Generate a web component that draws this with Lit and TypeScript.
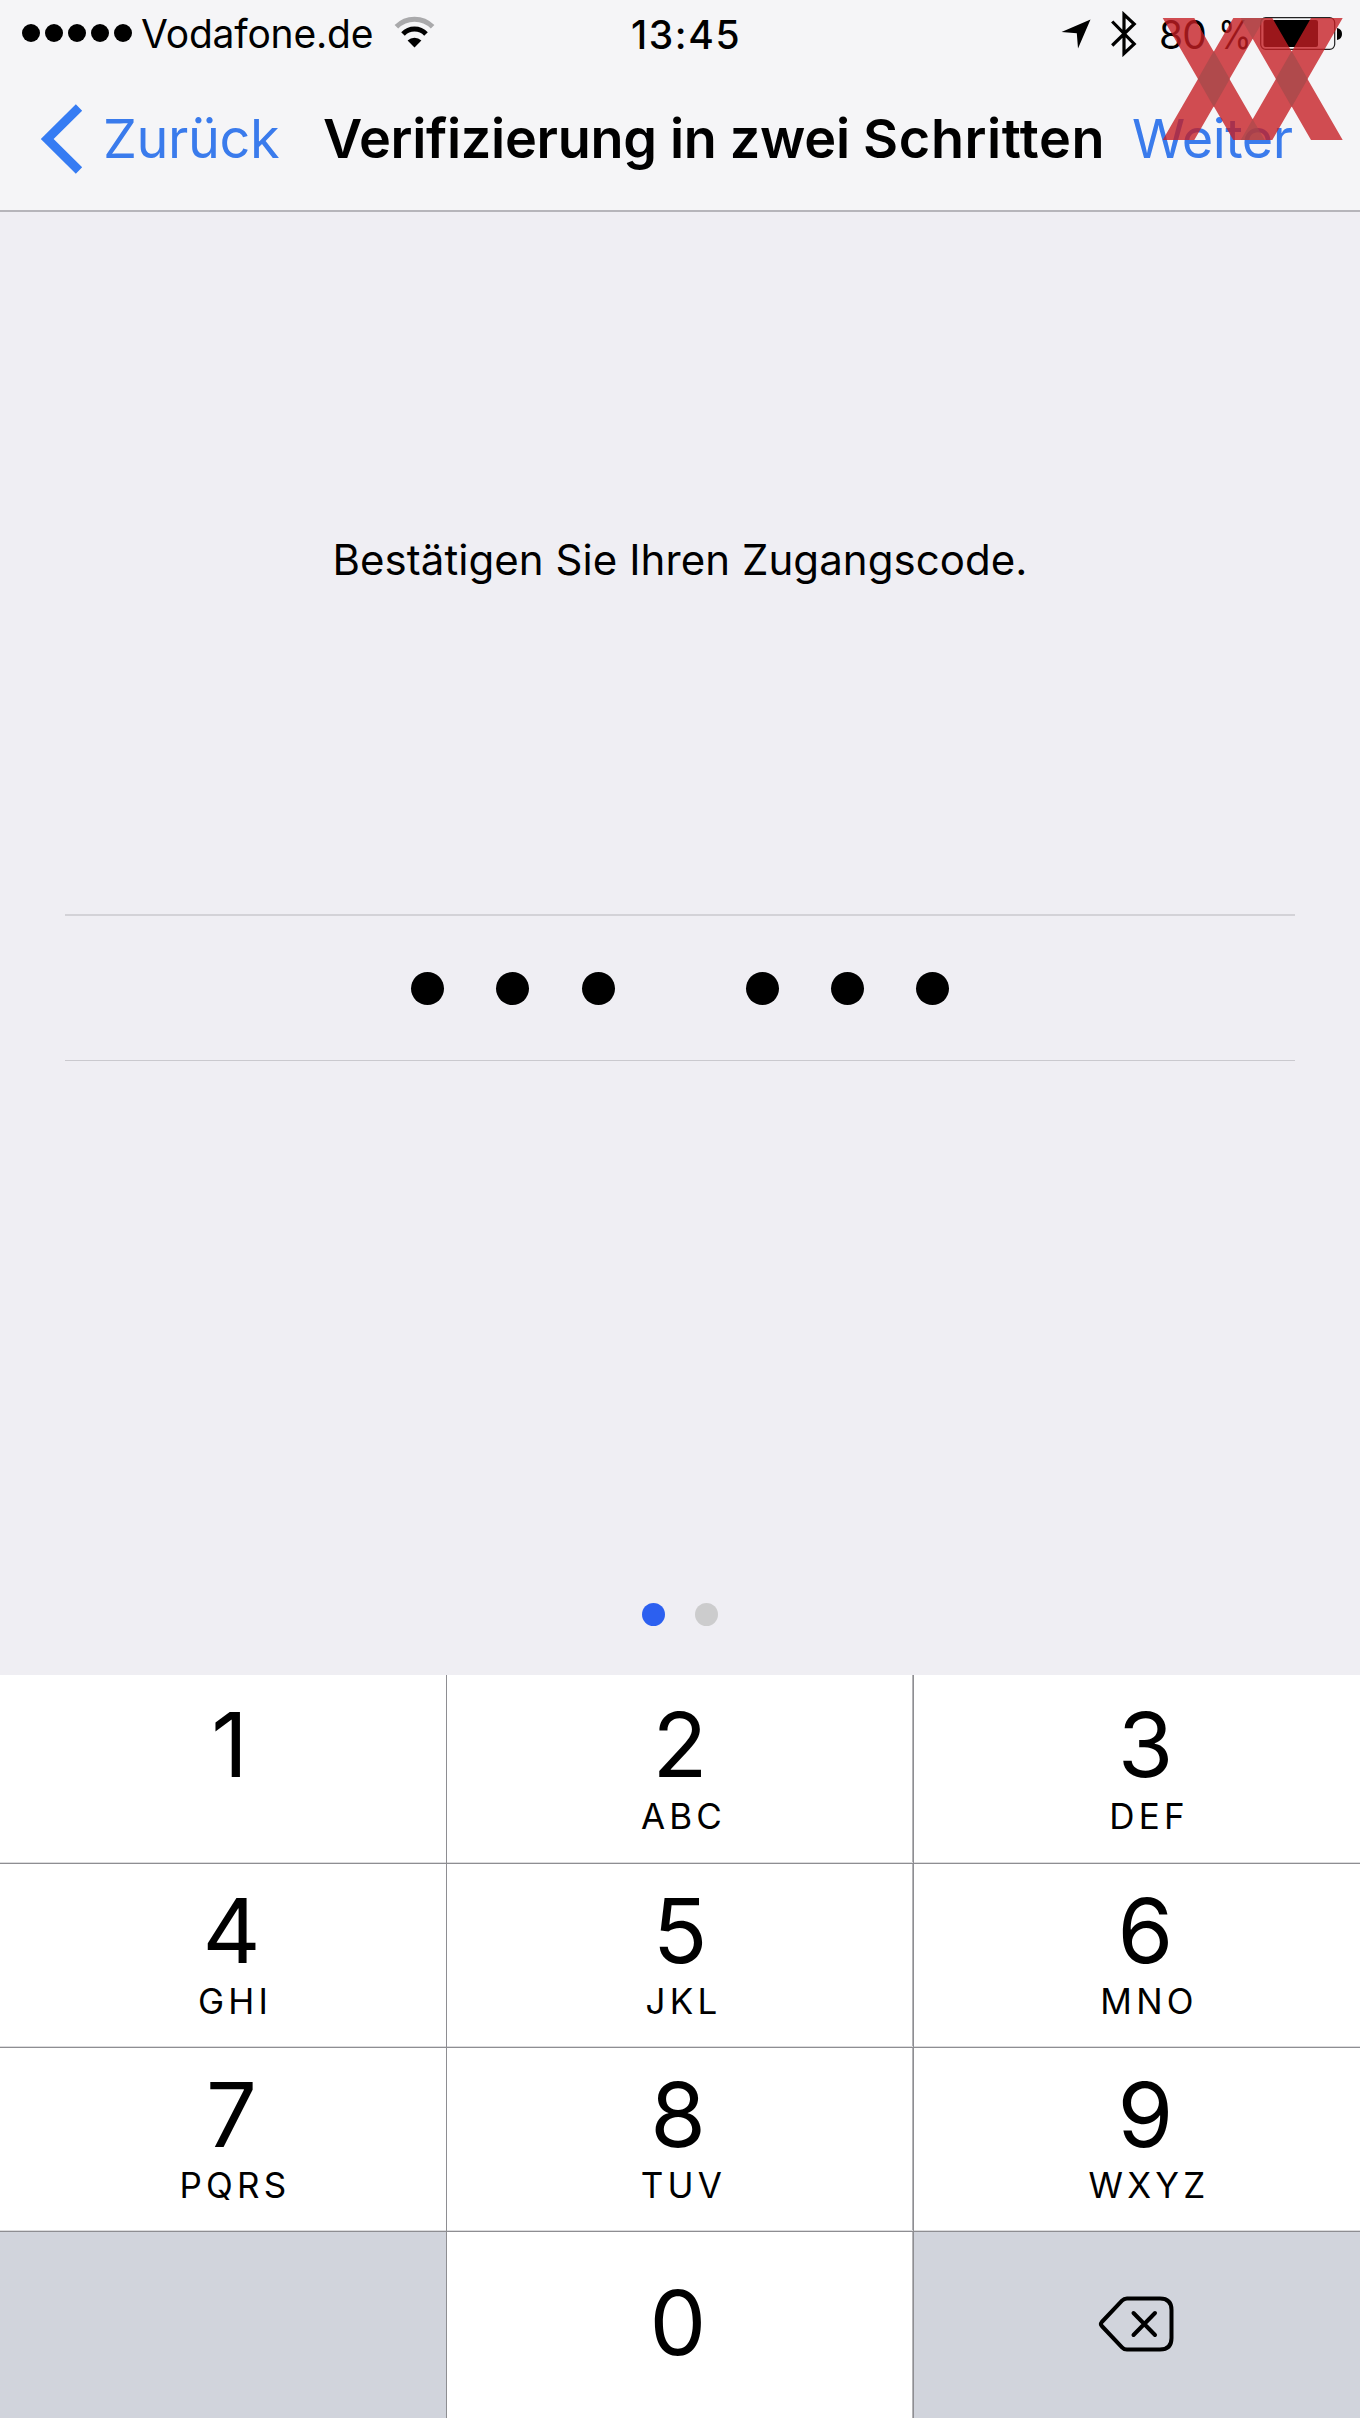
import { LitElement, html, css, svg } from "lit";
import { customElement } from "lit/decorators.js";

const KEYS = [
  ["1", ""], ["2", "ABC"], ["3", "DEF"],
  ["4", "GHI"], ["5", "JKL"], ["6", "MNO"],
  ["7", "PQRS"], ["8", "TUV"], ["9", "WXYZ"],
];

@customElement("status-bar")
class StatusBar extends LitElement {
  static styles = css`
    :host { display: grid; grid-template-columns: 632px 1fr auto; align-items: center; height: 68px; padding: 0 17px 0 22px; box-sizing: border-box; }
    .left, .right, .signal { display: flex; align-items: center; }
    .signal { gap: 5px; margin-right: 9px; padding-bottom: 2px; }
    .signal i { width: 18px; height: 18px; border-radius: 50%; background: #000; }
    .text { font-size: 39px; line-height: 48px; white-space: nowrap; }
    .carrier { letter-spacing: -0.2px; width: 253px; }
    .left { width: 600px; }
    .time { font-weight: 500; letter-spacing: 1.6px; margin-left: -23px; padding-top: 1px; }
    .battery-text { display: flex; gap: 12px; letter-spacing: -1px; width: 101px; padding-top: 1px; }
    .percent { transform: scaleX(0.88); transform-origin: left; }
    svg { display: block; flex: none; }
    .wifi { margin-top: -4px; }
    .arrow { margin-right: 20px; }
    .bt { margin-right: 22px; }
  `;
  render() {
    return html`
      <div class="left">
        <div class="signal"><i></i><i></i><i></i><i></i><i></i></div>
        <div class="text carrier">Vodafone.de</div>
        <svg class="wifi" width="42" height="32" viewBox="0 0 42 32" fill="none" stroke="#000" stroke-width="5">
          <path d="M2.4 10.8A25.4 25.4 0 0 1 38.6 10.8" stroke="#a9a9ab" />
          <path d="M9 18A16 16 0 0 1 32 18" />
          <path d="M20.5 31.4L13.6 24.4A10.5 10.5 0 0 1 27.4 24.4Z" fill="#000" stroke="none" />
        </svg>
      </div>
      <div class="text time">13:45</div>
      <div class="right">
        <svg class="arrow" width="30" height="30" viewBox="0 0 30 30"><path d="M29.5 0.5L17 29.5L15.8 14.3L0.5 13Z" /></svg>
        <svg class="bt" width="26" height="46" viewBox="0 0 26 46" fill="none" stroke="#000" stroke-width="3.2"><path d="M1.2 10.5L23.2 33L13 42.5V3.5L23.2 13L1.2 34.5" /></svg>
        <div class="text battery-text"><span>80</span> <span class="percent">%</span></div>
        <svg width="83" height="34" viewBox="0 0 83 34"><rect x="0.7" y="0.7" width="74" height="31.6" rx="5" fill="none" stroke="#222" stroke-width="1.2" /><rect x="3.5" y="3" width="54.5" height="27" rx="2" /><path d="M77 11Q82 12 82 17Q82 22 77 23Z" /></svg>
      </div>`;
  }
}

@customElement("nav-bar")
class NavBar extends LitElement {
  static styles = css`
    :host { display: flex; align-items: center; height: 144px; box-sizing: border-box; border-bottom: 2px solid #b6b5ba; padding-left: 40px; font-size: 54px; line-height: 66px; white-space: nowrap; }
    svg { display: block; flex: none; margin-right: 20px; }
    .link { color: #3a7bec; }
    .back { width: 220px; letter-spacing: -0.4px; }
    .title { width: 809px; font-weight: 600; letter-spacing: -0.3px; }
    .last-word { letter-spacing: 0.6px; }
    .next { letter-spacing: -0.6px; }
  `;
  render() {
    return html`
      <svg width="43" height="70" viewBox="0 0 43 70" fill="none" stroke="#367cf3" stroke-width="9"><path d="M39 3.5L7.2 35L39 66.5" /></svg>
      <div class="link back">Zurück</div>
      <div class="title">Verifizierung in zwei <span class="last-word">Schritten</span></div>
      <div class="link next">Weiter</div>`;
  }
}

@customElement("key-pad")
class KeyPad extends LitElement {
  static styles = css`
    :host { display: grid; grid-template-columns: 446px 466px 446px; grid-template-rows: 188px 183px 183px 186px; gap: 1px; background: #8e8e92; height: 743px; }
    .key { background: #fff; display: flex; flex-direction: column; align-items: center; padding-top: 21px; box-sizing: border-box; overflow: hidden; box-shadow: inset 0 -1px #dcdcde; }
    .key:nth-child(3n + 1) { padding-left: 17px; }
    .key:nth-child(3n) { padding-left: 17px; }
    .key:nth-child(3n + 2) { box-shadow: inset 0 -1px #dcdcde, inset -1px 0 #b4b4b7; }
    .key:nth-child(n + 4) { padding-top: 18px; }
    .digit { font-size: 90px; line-height: 98px; }
    .key:first-child .digit { margin-right: 4px; }
    .key:nth-child(8) .digit, .key.zero .digit { margin-right: 4px; }
    .letters { font-size: 35px; line-height: 44px; letter-spacing: 4.2px; margin-right: -7px; }
    .key:nth-child(n + 4) .letters { margin-top: -1px; }
    .key.grey { background: #d1d4dc; justify-content: center; padding: 0; box-shadow: none; }
    .key.zero { padding-top: 42px; box-shadow: inset -1px 0 #b4b4b7; }
    svg { display: block; margin: 0 3px 2px 0; }
  `;
  render() {
    return html`
      ${KEYS.map(([d, l]) => html`<div class="key"><div class="digit">${d}</div><div class="letters">${l}</div></div>`)}
      <div class="key grey"></div>
      <div class="key zero"><div class="digit">0</div></div>
      <div class="key grey">
        <svg width="76" height="56" viewBox="0 0 76 56" fill="none" stroke="#000" stroke-width="4" stroke-linecap="round" stroke-linejoin="round"><path d="M29 2.5H62Q73.5 2.5 73.5 14V42Q73.5 53.5 62 53.5H29Q26 53.5 24 51.3L3.8 30Q2 28 3.8 26L24 4.7Q26 2.5 29 2.5Z" /><path d="M35.5 17L57 39M57 17L35.5 39" /></svg>
      </div>`;
  }
}

@customElement("app-root")
class AppRoot extends LitElement {
  static styles = css`
    :host { display: flex; flex-direction: column; position: relative; width: 1360px; height: 2418px; overflow: hidden; background: #efeef3; color: #000; font-family: Inter, "Liberation Sans", sans-serif; font-feature-settings: "calt" 0; }
    header { background: #f5f5f7; }
    main { flex: 1; display: flex; flex-direction: column; align-items: center; }
    .prompt { margin-top: 322px; font-size: 42px; line-height: 52px; letter-spacing: 0.06px; white-space: nowrap; }
    .code { margin-top: 328px; width: 1230px; height: 147px; box-sizing: border-box; border-top: 2px solid #d3d2d7; border-bottom: 1px solid #cac9ce; display: flex; justify-content: center; align-items: center; gap: 131px; }
    .group { display: flex; gap: 52.4px; }
    .group i { width: 33px; height: 33px; border-radius: 50%; background: #000; }
    .pages { display: flex; gap: 30px; margin-top: 542px; }
    .pages i { width: 23px; height: 23px; border-radius: 50%; background: #cccccd; }
    .pages .on { background: #2c60f0; }
    .badge { position: absolute; left: 1162px; top: 18px; }
  `;
  render() {
    const bars = svg`
      <path d="M0.7 0H32.3L102.7 122H71.3ZM71.3 0H102.7L32.3 122H0.7ZM78.7 0H110.3L180.7 122H149ZM149 0H180.7L110.3 122H78.7Z" fill="#c51d22" fill-opacity="0.785" />
      <path d="M51.8 33L67.8 61L51.8 89L35.8 61ZM129.7 33L145.7 61L129.7 89L113.7 61Z" fill="#b04a4c" />
      <path d="M78.7 0H102.7L90.7 20.8ZM78.7 122H102.7L90.7 101.2Z" fill="#a84a4c" fill-opacity="0.65" />`;
    return html`
      <header><status-bar></status-bar><nav-bar></nav-bar></header>
      <main>
        <div class="prompt">Bestätigen Sie Ihren Zugangscode.</div>
        <div class="code"><div class="group"><i></i><i></i><i></i></div><div class="group"><i></i><i></i><i></i></div></div>
        <div class="pages"><i class="on"></i><i></i></div>
      </main>
      <key-pad></key-pad>
      <svg class="badge" width="182" height="122" viewBox="0 0 182 122">${bars}</svg>`;
  }
}
